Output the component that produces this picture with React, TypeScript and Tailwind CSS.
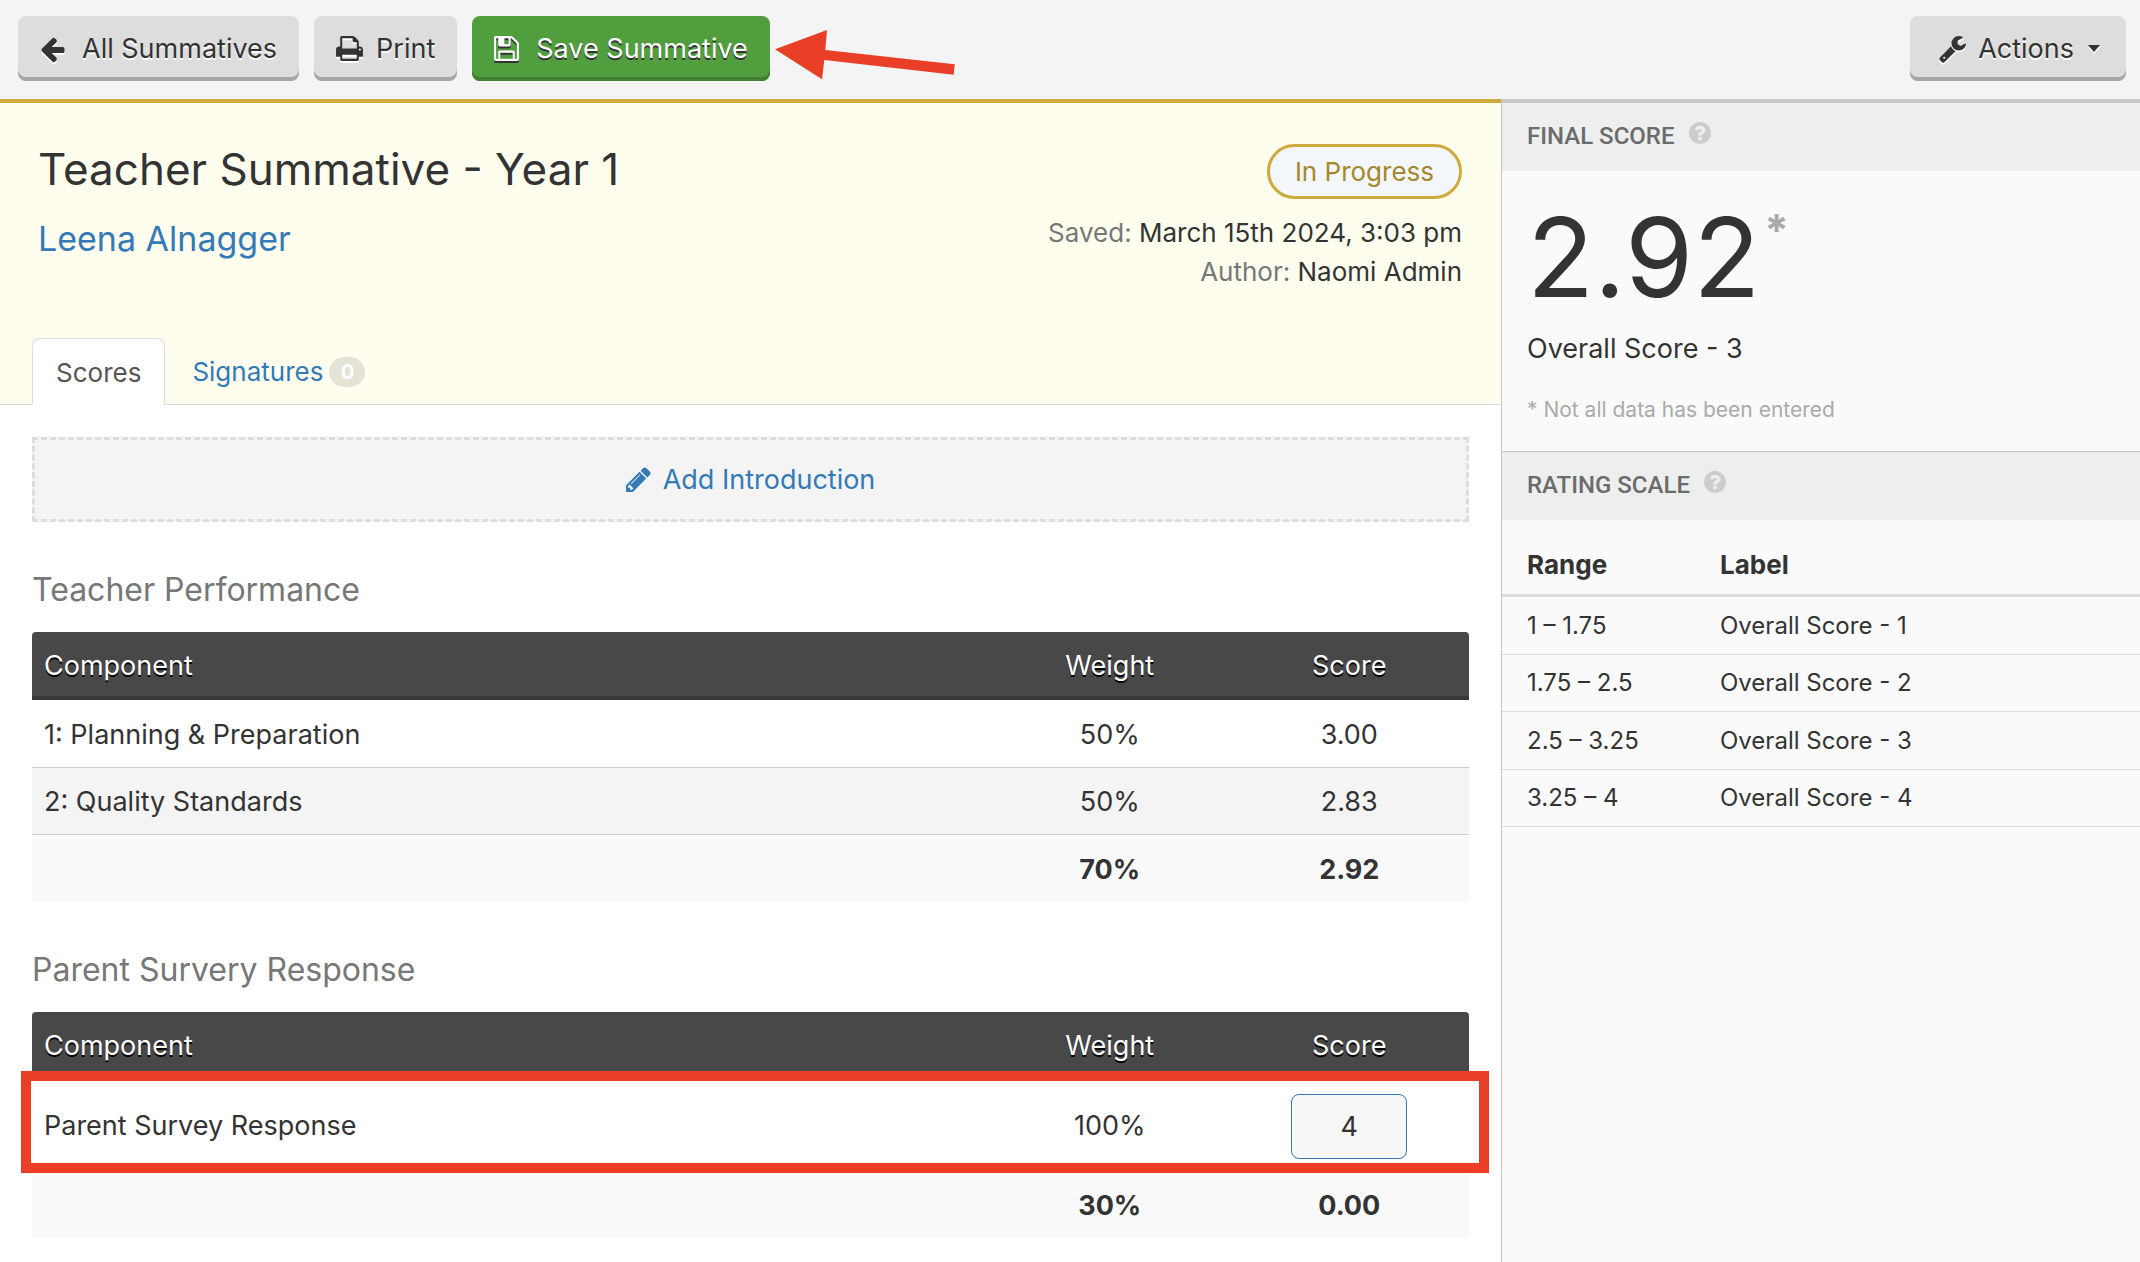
import type { ReactNode } from 'react';

const BUTTON_STYLES =
  'flex h-[65px] items-center rounded-lg bg-[#dddddd] text-[27px] shadow-[inset_0_-4px_0_#a6a6a6] [text-shadow:0_2px_0_#ffffff] [&_svg]:drop-shadow-[0_2px_0_#ffffff]';

type ScoreRow = { name: string; weight: string; score: ReactNode };

const PERFORMANCE_ROWS: ScoreRow[] = [
  { name: '1: Planning & Preparation', weight: '50%', score: '3.00' },
  { name: '2: Quality Standards', weight: '50%', score: '2.83' },
];

const RATINGS = [
  { range: '1 – 1.75', label: 'Overall Score - 1' },
  { range: '1.75 – 2.5', label: 'Overall Score - 2' },
  { range: '2.5 – 3.25', label: 'Overall Score - 3' },
  { range: '3.25 – 4', label: 'Overall Score - 4' },
];

const ArrowLeftIcon = () => (
  <svg width="25" height="28" viewBox="96 0 1600 1792" fill="currentColor">
    <path d="M1664 896v128q0 53-32.500 90.500t-84.500 37.500h-704l293 294q38 36 38 90t-38 90l-75 76q-37 37-90 37-52 0-91-37l-651-652q-37-37-37-90 0-52 37-91l651-650q38-38 91-38 52 0 90 38l75 74q38 38 38 91t-38 91l-293 293h704q52 0 84.500 37.500t32.500 90.500z" />
  </svg>
);

const PrinterIcon = () => (
  <svg width="27" height="29" viewBox="64 0 1664 1792" fill="currentColor">
    <path d="M448 1536h896v-256h-896v256zm0-640h896v-384h-160q-40 0-68-28t-28-68v-160h-640v640zm1152 64q0-26-19-45t-45-19-45 19-19 45 19 45 45 19 45-19 19-45zm128 0v416q0 13-9.500 22.500t-22.500 9.500h-224v160q0 40-28 68t-68 28h-960q-40 0-68-28t-28-68v-160h-224q-13 0-22.500-9.500t-9.500-22.500v-416q0-79 56.500-135.500t135.500-56.500h64v-544q0-40 28-68t68-28h672q40 0 88 20t76 48l152 152q28 28 48 76t20 88v256h64q79 0 135.500 56.500t56.500 135.500z" />
  </svg>
);

const SaveIcon = () => (
  <svg width="25" height="29" viewBox="128 0 1536 1792" fill="currentColor">
    <path d="M512 1536h768v-384h-768v384zm896 0h128v-896q0-14-10-38.500t-20-34.500l-281-281q-10-10-34-20t-39-10v416q0 40-28 68t-68 28h-576q-40 0-68-28t-28-68v-416h-128v1280h128v-416q0-40 28-68t68-28h832q40 0 68 28t28 68v416zm-384-928v-320q0-13-9.500-22.500t-22.500-9.500h-192q-13 0-22.500 9.500t-9.500 22.500v320q0 13 9.500 22.500t22.500 9.500h192q13 0 22.500-9.500t9.500-22.500zm640 32v928q0 40-28 68t-68 28h-1344q-40 0-68-28t-28-68v-1344q0-40 28-68t68-28h928q40 0 88 20t76 48l280 280q28 28 48 76t20 88z" />
  </svg>
);

const WrenchIcon = () => (
  <svg width="27" height="29" viewBox="64 0 1664 1792" fill="currentColor">
    <path d="M448 1472q0-26-19-45t-45-19-45 19-19 45 19 45 45 19 45-19 19-45zm644-420l-682 682q-37 37-90 37-52 0-91-37l-106-108q-38-36-38-90 0-53 38-91l681-681q39 98 114.500 173.500t173.500 114.500zm634-435q0 39-23 106-47 134-164.500 217.500t-258.500 83.500q-185 0-316.500-131.500t-131.500-316.500 131.500-316.500 316.500-131.500q58 0 121.500 16.500t107.500 46.500q16 11 16 28t-16 28l-293 169v224l193 107q5-3 79-48.500t135.500-81 70.500-35.500q15 0 23.500 10t8.500 25z" />
  </svg>
);

const PencilIcon = () => (
  <svg width="25" height="29" viewBox="128 0 1536 1792" fill="currentColor">
    <path d="M491 1536l91-91-235-235-91 91v107h128v128h107zm523-928q0-22-22-22-10 0-17 7l-542 542q-7 7-7 17 0 22 22 22 10 0 17-7l542-542q7-7 7-17zm-54-192l416 416-832 832h-416v-416zm683 96q0 53-37 90l-166 166-416-416 166-165q36-38 90-38 53 0 91 38l235 234q37 39 37 91z" />
  </svg>
);

const HelpIcon = () => (
  <svg width="22" height="22" viewBox="128 128 1536 1536" fill="#cccccc">
    <path d="M1024 1376v-192q0-14-9-23t-23-9h-192q-14 0-23 9t-9 23v192q0 14 9 23t23 9h192q14 0 23-9t9-23zm256-672q0-88-55.500-163t-138.500-116-170-41q-243 0-371 213-15 24 8 42l132 100q7 6 19 6 16 0 25-12 53-68 86-92 34-24 86-24 48 0 85.500 26t37.500 59q0 38-20 61t-68 45q-63 28-115.500 86.500t-52.500 125.500v36q0 14 9 23t23 9h192q14 0 23-9t9-23q0-19 21.500-49.500t54.500-49.500q32-18 49-28.500t46-35 44.500-48 28-60.500 12.500-81zm384 192q0 209-103 385.500t-279.500 279.500-385.500 103-385.500-103-279.500-279.500-103-385.500 103-385.500 279.500-279.500 385.500-103 385.500 103 279.500 279.500 103 385.500z" />
  </svg>
);

const SideHeading = ({ children }: { children: ReactNode }) => (
  <div className="flex h-[68px] items-center gap-[14px] bg-[#edefee] px-[25px] pb-1">
    <h2 className="pt-0.5 font-['Roboto',sans-serif] text-2xl font-medium text-[#6b6b6b]">{children}</h2>
    <button type="button" aria-label="Help" className="-mt-1">
      <HelpIcon />
    </button>
  </div>
);

const ScoreTable = ({
  title,
  rows,
  weight,
  score,
  highlighted,
}: {
  title: string;
  rows: ScoreRow[];
  weight: string;
  score: string;
  highlighted?: boolean;
}) => (
  <section className="mt-12">
    <h2 className="text-[32px] leading-10 text-[#777777]">{title}</h2>
    <table className="mt-[22px] w-full table-fixed border-separate border-spacing-0 text-[27px] leading-10">
      <thead className="text-white [text-shadow:0_2px_0_#000000]">
        <tr className="h-[68px]">
          <th className="rounded-tl border-b-4 border-[#393939] bg-[#484848] px-3 pt-1 text-left font-normal">
            Component
          </th>
          <th className="w-1/6 border-b-4 border-[#393939] bg-[#484848] pt-1 font-normal">Weight</th>
          <th className="w-1/6 rounded-tr border-b-4 border-[#393939] bg-[#484848] pt-1 font-normal">Score</th>
        </tr>
      </thead>
      <tbody>
        {rows.map((row) => (
          <tr key={row.name} className={highlighted ? 'h-[91px]' : 'h-[67px] first:h-[68px] even:bg-[#f4f4f4]'}>
            <td className="border-b border-[#cccccc] px-3 pt-0.5">{row.name}</td>
            <td className="border-b border-[#cccccc] pt-0.5 text-center">{row.weight}</td>
            <td className="border-b border-[#cccccc] pt-0.5 text-center">{row.score}</td>
          </tr>
        ))}
      </tbody>
      <tfoot>
        <tr className="h-[67px] bg-[#f9f9f9] font-bold">
          <td />
          <td className="pt-0.5 text-center">{weight}</td>
          <td className="pt-0.5 text-center">{score}</td>
        </tr>
      </tfoot>
    </table>
  </section>
);

const App = () => {
  return (
    <div className="flex min-h-screen flex-col bg-white font-['Inter',sans-serif] text-[#333333]">
      <header className="flex h-[99px] items-start justify-between bg-[#f4f4f4] pt-4 pr-[14px] pl-[18px]">
        <div className="flex gap-[15px]">
          <button type="button" className={`${BUTTON_STYLES} px-[22px]`}>
            <ArrowLeftIcon />
            <span className="ml-[17px] pt-px">All Summatives</span>
          </button>
          <button type="button" className={`${BUTTON_STYLES} px-[22px]`}>
            <PrinterIcon />
            <span className="ml-[13px] pt-px">Print</span>
          </button>
          <div className="relative">
            <button
              type="button"
              className="flex h-[65px] items-center rounded-lg bg-[#509e3d] px-[22px] text-[27px] text-white shadow-[inset_0_-4px_0_#407e31] [text-shadow:0_2px_0_#333333] [&_svg]:drop-shadow-[0_2px_0_#333333]"
            >
              <SaveIcon />
              <span className="ml-[17px] pt-px">Save Summative</span>
            </button>
            <svg className="absolute top-[14px] left-full ml-[5px]" width="180" height="50" viewBox="0 0 180 50">
              <path d="M0 19.300 52 0l-1.700 20L179.700 34.300l-1 10.400L49.300 30 47 49.300z" fill="#e93f26" />
            </svg>
          </div>
        </div>
        <button type="button" className={`${BUTTON_STYLES} pr-[26px] pl-[29px]`}>
          <WrenchIcon />
          <span className="ml-3 pt-px">Actions</span>
          <svg className="ml-[14px]" width="12" height="7" viewBox="0 0 12 7">
            <path d="M0 0h12L6 7z" fill="currentColor" />
          </svg>
        </button>
      </header>

      <div className="flex grow">
        <main className="min-w-0 grow">
          <div className="flex h-[306px] flex-col justify-between border-t-4 border-b border-t-[#cfaa3c] border-b-[#dddddd] bg-[#fffdee]">
            <div className="flex justify-between pt-10 pr-[39px] pl-[38px]">
              <div>
                <h1 className="text-[44px] leading-[52px]">Teacher Summative - Year 1</h1>
                <a href="#" className="mt-6 block text-[34px] leading-10 text-[#337ab7]">
                  Leena Alnagger
                </a>
              </div>
              <div className="flex flex-col items-end text-[26px] leading-[39px]">
                <span className="mt-px mb-[14px] flex h-[55px] items-center rounded-full border-3 border-[#cfaa3c] bg-[#f3f6fb] px-[25px] text-[#a5872d]">
                  In Progress
                </span>
                <p>
                  <span className="text-[#777777]">Saved:</span> March 15th 2024, 3:03 pm
                </p>
                <p>
                  <span className="text-[#777777]">Author:</span> Naomi Admin
                </p>
              </div>
            </div>
            <nav className="-mb-px flex px-8 text-[26px]">
              <a
                href="#"
                className="flex h-[67px] items-center rounded-t-lg border border-b-0 border-[#dddddd] bg-white px-[23px] text-[#555555]"
              >
                Scores
              </a>
              <a href="#" className="flex h-[67px] items-center px-[27px] text-[#337ab7]">
                Signatures
                <span className="ml-1.5 flex h-[30px] w-9 items-center justify-center rounded-full bg-[#e5e3d6] text-xl font-bold text-white">
                  0
                </span>
              </a>
            </nav>
          </div>

          <div className="px-8 pt-8">
            <button
              type="button"
              className="flex h-[85px] w-full items-center justify-center gap-3 border-3 border-dashed border-[#dddddd] bg-[#f4f4f4] text-[27px] text-[#337ab7]"
            >
              <PencilIcon />
              <span className="pt-0.5">Add Introduction</span>
            </button>
            <ScoreTable title="Teacher Performance" rows={PERFORMANCE_ROWS} weight="70%" score="2.92" />
            <div className="relative">
              <ScoreTable
                title="Parent Survery Response"
                rows={[
                  {
                    name: 'Parent Survey Response',
                    weight: '100%',
                    score: (
                      <input
                        type="text"
                        aria-label="Score"
                        defaultValue="4"
                        className="h-[65px] w-[116px] rounded-lg border border-[#337ab7] bg-[#f7f7f7] text-center"
                      />
                    ),
                  },
                ]}
                weight="30%"
                score="0.00"
                highlighted
              />
              <div className="pointer-events-none absolute right-[-20px] bottom-[65px] left-[-11px] h-[102px] border-10 border-[#e93f26]" />
            </div>
          </div>
        </main>

        <aside className="w-[639px] shrink-0 border-t-4 border-[#c6c8c7]">
          <div className="h-full border-l border-[#c4c4c4] bg-[#fafafa]">
            <SideHeading>FINAL SCORE</SideHeading>
            <div className="h-[280px] px-[25px] pt-[34px]">
              <div className="flex items-start">
                <span className="text-[110px] leading-[104px]">2.92</span>
                <span className="ml-1 text-[44px] leading-[50px] font-bold text-[#aaaaaa]">*</span>
              </div>
              <p className="mt-5 text-[27px] leading-10">Overall Score - 3</p>
              <p className="mt-[25px] text-[21px] leading-8 text-[#aaaaaa]">* Not all data has been entered</p>
            </div>
            <div className="border-t border-[#c4c4c4]">
              <SideHeading>RATING SCALE</SideHeading>
            </div>
            <table className="mt-4 w-full table-fixed border-separate border-spacing-0 text-left text-2xl">
              <thead>
                <tr className="h-[61px] text-[26px]">
                  <th className="w-[193px] border-b-3 border-[#dddddd] pl-[25px] font-bold">Range</th>
                  <th className="border-b-3 border-[#dddddd] pl-[25px] font-bold">Label</th>
                </tr>
              </thead>
              <tbody>
                {RATINGS.map((rating) => (
                  <tr key={rating.range} className="h-[58px] even:h-[57px]">
                    <td className="border-b border-[#dddddd] pl-[25px]">{rating.range}</td>
                    <td className="border-b border-[#dddddd] pl-[25px]">{rating.label}</td>
                  </tr>
                ))}
              </tbody>
            </table>
          </div>
        </aside>
      </div>
    </div>
  );
};

export default App;
